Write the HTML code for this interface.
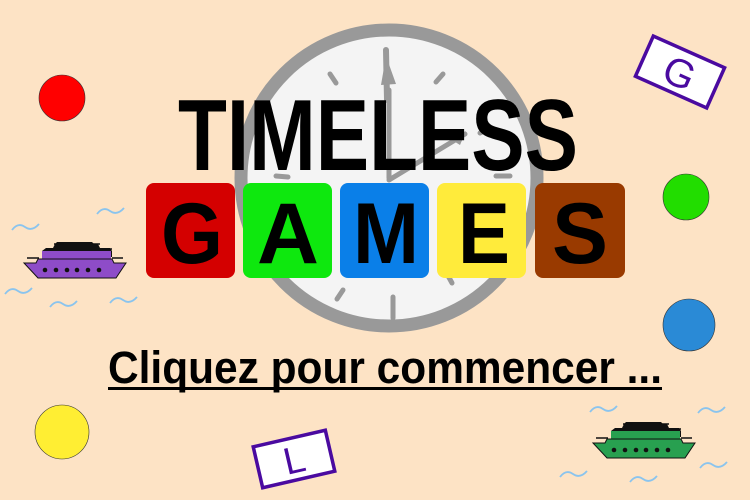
<!DOCTYPE html>
<html><head><meta charset="utf-8"><style>
html,body{margin:0;padding:0;width:750px;height:500px;overflow:hidden;background:#fde3c5}
svg{display:block}
</style></head><body>
<svg width="750" height="500" viewBox="0 0 750 500" xmlns="http://www.w3.org/2000/svg">
<defs>
<path id="w" d="M0 7 Q6 -1 13 4 T27 1" fill="none" stroke="#8ac4ee" stroke-width="1.8"/>
</defs>

<!-- clock -->
<circle cx="389" cy="178" r="148" fill="#f4f4f4" stroke="#999" stroke-width="13"/>
<g stroke="#999" stroke-width="5" stroke-linecap="round">
 <line x1="387" y1="100" x2="386" y2="50" stroke-width="6"/>
 <line x1="330" y1="74" x2="336" y2="83"/>
 <line x1="443" y1="74" x2="436" y2="82"/>
 <line x1="490" y1="128" x2="480" y2="133"/>
 <line x1="496" y1="176" x2="510" y2="176"/>
 <line x1="276" y1="176" x2="288" y2="177"/>
 <line x1="452" y1="283" x2="446" y2="272"/>
 <line x1="337" y1="299" x2="343" y2="290"/>
 <line x1="393" y1="297" x2="393" y2="318"/>
 <line x1="389" y1="180" x2="465" y2="134"/>
 <line x1="389" y1="178" x2="389" y2="90" stroke-width="5"/>
</g>
<path d="M381 85 L386 56 L396 84 Z" fill="#999"/>
<path d="M452 140 L466 131 L460 145 Z" fill="#999"/>

<!-- TIMELESS -->
<text x="178" y="170" font-family="Liberation Sans, sans-serif" font-weight="bold" font-size="101" textLength="400" lengthAdjust="spacingAndGlyphs" fill="#000">TIMELESS</text>

<!-- tiles -->
<rect x="146" y="183" width="89" height="95" rx="8" fill="#d40000"/>
<rect x="243" y="183" width="89" height="95" rx="8" fill="#0ee80e"/>
<rect x="340" y="183" width="89" height="95" rx="8" fill="#0a7fe8"/>
<rect x="437" y="183" width="89" height="95" rx="8" fill="#ffeb3b"/>
<rect x="535" y="183" width="90" height="95" rx="8" fill="#993a00"/>
<g font-family="Liberation Sans, sans-serif" font-weight="bold" font-size="86" fill="#000" text-anchor="middle">
 <text x="192" y="263" textLength="62" lengthAdjust="spacingAndGlyphs">G</text>
 <text x="288" y="263" textLength="62" lengthAdjust="spacingAndGlyphs">A</text>
 <text x="386" y="263" textLength="66" lengthAdjust="spacingAndGlyphs">M</text>
 <text x="484" y="263" textLength="52" lengthAdjust="spacingAndGlyphs">E</text>
 <text x="580" y="263" textLength="56" lengthAdjust="spacingAndGlyphs">S</text>
</g>

<!-- subtitle -->
<text x="108" y="383" font-family="Liberation Sans, sans-serif" font-weight="bold" font-size="45" textLength="554" lengthAdjust="spacingAndGlyphs" fill="#000">Cliquez pour commencer ...</text>
<rect x="108" y="387" width="554" height="3" fill="#000"/>

<!-- circles -->
<circle cx="62" cy="98" r="23" fill="#ff0000" stroke="#333" stroke-width="0.6"/>
<circle cx="686" cy="197" r="23" fill="#22dd00" stroke="#333" stroke-width="0.6"/>
<circle cx="689" cy="325" r="26" fill="#2a8ad6" stroke="#333" stroke-width="0.6"/>
<circle cx="62" cy="432" r="27" fill="#ffee33" stroke="#333" stroke-width="0.6"/>

<!-- cards -->
<g transform="translate(680 72) rotate(24)">
 <rect x="-39" y="-22" width="78" height="44" fill="#fff" stroke="#4a0aa0" stroke-width="3.5"/>
 <text x="0" y="15" text-anchor="middle" font-family="Liberation Sans, sans-serif" font-size="40" fill="#4a0aa0">G</text>
</g>
<g transform="translate(294 459) rotate(-13)">
 <rect x="-37" y="-21" width="74" height="42" fill="#fff" stroke="#4a0aa0" stroke-width="3.5"/>
 <text x="0" y="14" text-anchor="middle" font-family="Liberation Sans, sans-serif" font-size="38" fill="#4a0aa0">L</text>
</g>

<!-- ships -->
<g transform="translate(24 240)">
 <path d="M33 2 H68 L70 4 H74 L76 8 H86 L88 11 V17 H18 V11 L22 8 H29 L31 4 Z" fill="#111"/>
 <rect x="18" y="11" width="69" height="8" fill="#8e4cc8"/>
 <path d="M0 23 H12 L14 19 H88 L90 23 H102 L92 38 H14 Z" fill="#8e4cc8" stroke="#111" stroke-width="1"/>
 <path d="M3 18 H15 M88 18 H99 M22 9 H30 M78 9 H88 M30 4 H40 M66 4 H76" stroke="#111" stroke-width="1.5"/>
 <g fill="#111"><circle cx="21" cy="30" r="2.3"/><circle cx="32" cy="30" r="2.3"/><circle cx="43" cy="30" r="2.3"/><circle cx="53" cy="30" r="2.3"/><circle cx="64" cy="30" r="2.3"/><circle cx="75" cy="30" r="2.3"/></g>
</g>
<g transform="translate(593 420)">
 <path d="M33 2 H68 L70 4 H74 L76 8 H86 L88 11 V17 H18 V11 L22 8 H29 L31 4 Z" fill="#111"/>
 <rect x="18" y="11" width="69" height="8" fill="#28a050"/>
 <path d="M0 23 H12 L14 19 H88 L90 23 H102 L92 38 H14 Z" fill="#28a050" stroke="#111" stroke-width="1"/>
 <path d="M3 18 H15 M88 18 H99 M22 9 H30 M78 9 H88 M30 4 H40 M66 4 H76" stroke="#111" stroke-width="1.5"/>
 <g fill="#111"><circle cx="21" cy="30" r="2.3"/><circle cx="32" cy="30" r="2.3"/><circle cx="43" cy="30" r="2.3"/><circle cx="53" cy="30" r="2.3"/><circle cx="64" cy="30" r="2.3"/><circle cx="75" cy="30" r="2.3"/></g>
</g>

<!-- waves -->
<use href="#w" transform="translate(12 223)"/>
<use href="#w" transform="translate(97 207)"/>
<use href="#w" transform="translate(5 287)"/>
<use href="#w" transform="translate(50 300)"/>
<use href="#w" transform="translate(110 296)"/>
<use href="#w" transform="translate(590 405)"/>
<use href="#w" transform="translate(698 406)"/>
<use href="#w" transform="translate(560 470)"/>
<use href="#w" transform="translate(630 475)"/>
<use href="#w" transform="translate(700 461)"/>
</svg>
</body></html>
